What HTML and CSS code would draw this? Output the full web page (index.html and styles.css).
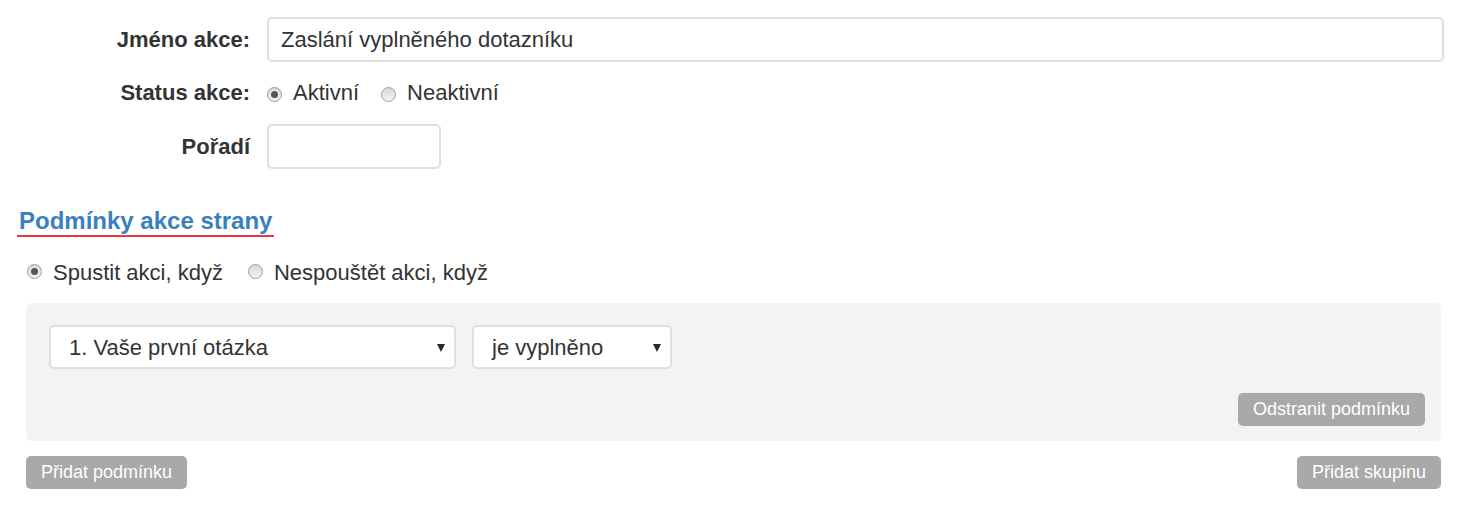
FILE: index.html
```html
<!DOCTYPE html>
<html lang="cs">
<head>
<meta charset="utf-8">
<title>Akce</title>
<link rel="stylesheet" href="styles.css">
</head>
<body>
<div class="page">
  <div class="form">
    <div class="label">Jméno akce:</div>
    <div class="field"><div class="input input-wide">Zaslání vyplněného dotazníku</div></div>

    <div class="label label-status">Status akce:</div>
    <div class="field field-status">
      <span class="radio-opt"><span class="radio checked status-radio"></span><span class="opt-text">Aktivní</span></span>
      <span class="radio-opt"><span class="radio status-radio"></span><span class="opt-text">Neaktivní</span></span>
    </div>

    <div class="label">Pořadí</div>
    <div class="field"><div class="input input-small"></div></div>
  </div>

  <div class="conditions">
    <div class="title-wrap"><h2 class="section-title">Podmínky akce strany</h2></div>

    <div class="mode-row">
      <span class="radio-opt"><span class="radio checked mode-radio"></span><span class="opt-text">Spustit akci, když</span></span>
      <span class="radio-opt"><span class="radio mode-radio"></span><span class="opt-text">Nespouštět akci, když</span></span>
    </div>

    <div class="panel">
      <div class="selects">
        <div class="select select-question"><span class="select-text">1. Vaše první otázka</span><span class="caret"></span></div>
        <div class="select select-op"><span class="select-text">je vyplněno</span><span class="caret"></span></div>
      </div>
      <div class="panel-actions">
        <span class="btn">Odstranit podmínku</span>
      </div>
    </div>

    <div class="bottom-actions">
      <span class="btn">Přidat podmínku</span>
      <span class="btn">Přidat skupinu</span>
    </div>
  </div>
</div>
</body>
</html>
```

FILE: styles.css
```css
* { box-sizing: border-box; }

html, body {
  margin: 0;
  padding: 0;
  background: #ffffff;
}

body {
  font-family: "Liberation Sans", Arial, sans-serif;
  font-size: 22px;
  color: #333333;
}

.page {
  width: 1468px;
}

.form {
  display: grid;
  grid-template-columns: 250px 1fr;
  grid-template-rows: 45px 46px 45px;
  column-gap: 17px;
  row-gap: 8px;
  padding: 17px 24px 0 0;
}

.label {
  justify-self: end;
  align-self: center;
  font-weight: bold;
  line-height: 25px;
}

.label-status {
  align-self: start;
  padding-top: 10px;
}

.field {
  display: flex;
  align-items: center;
}

.field-status {
  align-items: flex-start;
  padding-top: 10px;
  line-height: 25px;
}

.input {
  height: 45px;
  border: 2px solid #dcdfe3;
  border-radius: 5px;
  background: #ffffff;
  padding: 0 12px;
  display: flex;
  align-items: center;
  line-height: 25px;
  color: #333333;
}

.input-wide { width: 100%; }
.input-small { width: 174px; }

.radio-opt {
  display: inline-flex;
  align-items: flex-start;
  line-height: 25px;
}

.radio {
  width: 15px;
  height: 15px;
  border-radius: 50%;
  border: 1px solid #9e9e9e;
  background: linear-gradient(#d6d6d6, #f4f4f4);
  display: inline-flex;
  align-items: center;
  justify-content: center;
  margin-right: 11px;
  flex: none;
}

.radio.checked::after {
  content: "";
  width: 7px;
  height: 7px;
  border-radius: 50%;
  background: #555555;
  box-shadow: 0 0 0 1px #ececec;
}

.status-radio { margin-top: 7px; }
.mode-radio { margin-top: 4px; }

.field-status .radio-opt + .radio-opt { margin-left: 22px; }

.conditions {
  padding: 0 27px 0 26px;
}

.title-wrap {
  margin: 38px 0 0 -9px;
}

.section-title {
  display: inline-block;
  margin: 0;
  padding: 0 2px;
  font-size: 24px;
  line-height: 28px;
  font-weight: bold;
  color: #3a7fbf;
  border-bottom: 2px solid #e8383e;
}

.mode-row {
  display: flex;
  margin: 23px 0 0 1px;
}

.mode-row .radio-opt + .radio-opt { margin-left: 25px; }

.panel {
  margin-top: 18px;
  background: #f3f3f3;
  border-radius: 6px;
  padding: 22px 16px 15px 23px;
}

.selects {
  display: flex;
  gap: 16px;
}

.select {
  height: 44px;
  border: 2px solid #dcdfe3;
  border-radius: 5px;
  background: #ffffff;
  display: flex;
  align-items: center;
  justify-content: space-between;
  padding: 0 9px 0 18px;
  line-height: 25px;
}

.select-question { width: 407px; }
.select-op { width: 200px; }

.caret {
  width: 0;
  height: 0;
  border-left: 4px solid transparent;
  border-right: 4px solid transparent;
  border-top: 8px solid #2a2a2a;
  margin-top: 1px;
}

.panel-actions {
  display: flex;
  justify-content: flex-end;
  margin-top: 24px;
}

.btn {
  display: inline-flex;
  align-items: center;
  height: 33px;
  padding: 0 15px;
  background: #a9a9a9;
  color: #ffffff;
  font-size: 18px;
  border-radius: 5px;
  white-space: nowrap;
}

.bottom-actions {
  display: flex;
  justify-content: space-between;
  margin-top: 15px;
}
```
